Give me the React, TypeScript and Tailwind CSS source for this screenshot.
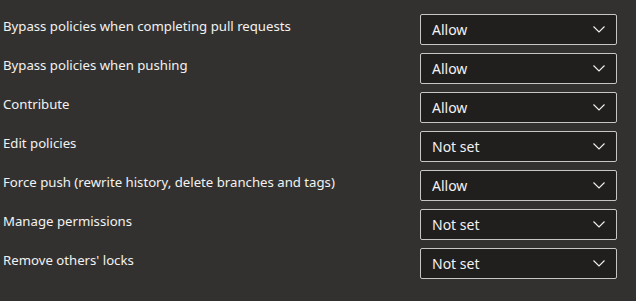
import React from 'react';

const rows: { label: string; value: string }[] = [
  { label: 'Bypass policies when completing pull requests', value: 'Allow' },
  { label: 'Bypass policies when pushing', value: 'Allow' },
  { label: 'Contribute', value: 'Allow' },
  { label: 'Edit policies', value: 'Not set' },
  { label: 'Force push (rewrite history, delete branches and tags)', value: 'Allow' },
  { label: 'Manage permissions', value: 'Not set' },
  { label: 'Remove others\' locks', value: 'Not set' },
];

const Chevron = () => (
  <svg width="12" height="7" viewBox="0 0 12 7" fill="none" className="text-[#f3f2f1]">
    <path d="M0.5 0.5 L6 6 L11.5 0.5" stroke="currentColor" strokeWidth="1.1" />
  </svg>
);

const App: React.FC = () => {
  return (
    <div
      className="w-[636px] h-[301px] bg-[#323130] text-[#f3f2f1] pl-[3px] pr-[19px] pt-[14px] flex flex-col gap-[8px]"
      style={{ fontFamily: '"Noto Sans", "Open Sans", sans-serif' }}
    >
      {rows.map((row) => (
        <div key={row.label} className="flex items-center h-[31px]">
          <span className="flex-1 text-[13.2px] leading-none pb-[6px]">{row.label}</span>
          <div className="w-[197px] h-[31px] bg-[#201f1e] border border-[#c8c6c4] rounded-[2px] flex items-center justify-between pl-[11px] pr-[11px]">
            <span className="text-[14px] leading-none">{row.value}</span>
            <Chevron />
          </div>
        </div>
      ))}
    </div>
  );
};

export default App;
